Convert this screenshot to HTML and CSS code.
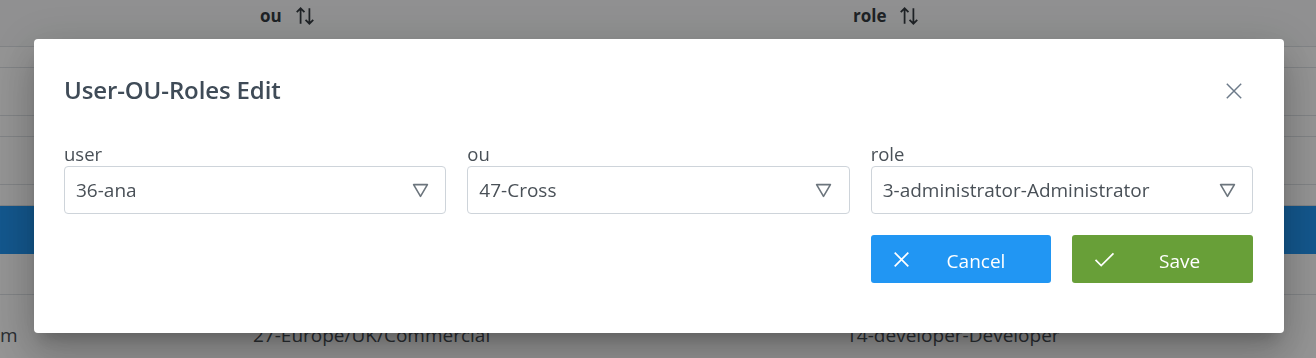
FILE: index.html
```html
<!DOCTYPE html>
<html>
<head>
<meta charset="utf-8">
<link rel="stylesheet" href="styles.css">
</head>
<body>
<div class="table">
  <div class="row thead">
    <div class="cell c1"></div>
    <div class="cell c2 th">ou <svg class="sort" viewBox="0 0 20 20"><path d="M6 17V3M2.5 6.5L6 3l3.5 3.5M14 3v14M10.5 13.5L14 17l3.5-3.5"/></svg></div>
    <div class="cell c3 th">role <svg class="sort" viewBox="0 0 20 20"><path d="M6 17V3M2.5 6.5L6 3l3.5 3.5M14 3v14M10.5 13.5L14 17l3.5-3.5"/></svg></div>
  </div>
  <div class="row h21"></div>
  <div class="row h48"></div>
  <div class="row h21"></div>
  <div class="row h48"></div>
  <div class="row h21"></div>
  <div class="row h48 sel"></div>
  <div class="row h41"></div>
  <div class="row last">
    <div class="cell c1">m</div>
    <div class="cell c2">27-Europe/UK/Commercial</div>
    <div class="cell c3">14-developer-Developer</div>
  </div>
</div>

<div class="mask">
  <div class="dialog">
    <div class="dlg-header">
      <span class="dlg-title">User-OU-Roles Edit</span>
      <button class="close" type="button"><svg viewBox="0 0 20 20"><path d="M2 2l16 16M18 2L2 18"/></svg></button>
    </div>
    <div class="form">
      <div class="field">
        <label>user</label>
        <div class="dropdown"><span class="value">36-ana</span><span class="trigger"><svg viewBox="0 0 16 14"><path d="M1.5 1.5h13L8 12.5z"/></svg></span></div>
      </div>
      <div class="field">
        <label>ou</label>
        <div class="dropdown"><span class="value">47-Cross</span><span class="trigger"><svg viewBox="0 0 16 14"><path d="M1.5 1.5h13L8 12.5z"/></svg></span></div>
      </div>
      <div class="field">
        <label>role</label>
        <div class="dropdown"><span class="value">3-administrator-Administrator</span><span class="trigger"><svg viewBox="0 0 16 14"><path d="M1.5 1.5h13L8 12.5z"/></svg></span></div>
      </div>
      <div class="actions">
        <button class="btn cancel" type="button"><svg class="bicon" viewBox="0 0 20 20"><path d="M2 2l16 16M18 2L2 18"/></svg><span class="blabel">Cancel</span></button>
        <button class="btn save" type="button"><svg class="bicon" viewBox="0 0 22 18"><path d="M1.5 9.5l6 6L20.5 2.5"/></svg><span class="blabel">Save</span></button>
      </div>
    </div>
  </div>
</div>
</body>
</html>
```

FILE: styles.css
```css
html, body {
  margin: 0;
  padding: 0;
  background: #ffffff;
  font-family: "Open Sans", "Noto Sans", sans-serif;
  color: #495057;
  overflow: hidden;
  width: 1316px;
  height: 358px;
}

.table {
  width: 1316px;
}

.row {
  display: grid;
  grid-template-columns: 237px 593px 1fr;
  border-bottom: 1px solid #dee2e6;
  box-sizing: border-box;
}

.thead {
  height: 47px;
  background: #f8f9fa;
  align-items: center;
}

.h21 { height: 21px; }
.h48 { height: 48px; }
.h41 { height: 41px; }
.sel { background: #2196f3; border-bottom-color: #2196f3; }
.last { height: 80px; align-items: center; border-bottom: none; }

.cell {
  padding-left: 16px;
  font-size: 19px;
  color: #495057;
  white-space: nowrap;
}

.c1 { padding-left: 0; }

.last .cell { padding-bottom: 1px; }

.th {
  font-weight: 700;
  font-size: 17px;
  color: #343a40;
  padding-left: 23px;
  display: flex;
  align-items: center;
  gap: 12px;
  padding-bottom: 15px;
}

.sort {
  width: 22px;
  height: 22px;
  fill: none;
  stroke: #343a40;
  stroke-width: 1.6;
}

.mask {
  position: fixed;
  inset: 0;
  background: rgba(0, 0, 0, 0.42);
  display: flex;
  align-items: flex-start;
  padding-top: 39px;
  padding-left: 34px;
  box-sizing: border-box;
}

.dialog {
  width: 1250px;
  background: #ffffff;
  border-radius: 4px;
  padding: 0 31px 50px 30px;
  box-sizing: border-box;
  box-shadow: 0 11px 15px -7px rgba(0,0,0,0.2), 0 24px 38px 3px rgba(0,0,0,0.14), 0 9px 46px 8px rgba(0,0,0,0.12);
}

.dlg-header {
  height: 104px;
  display: flex;
  align-items: center;
  justify-content: space-between;
}

.dlg-title {
  font-size: 24px;
  font-weight: 600;
  color: #3f4b57;
  letter-spacing: -0.12px;
  margin-bottom: 4px;
}

.close {
  width: 32px;
  height: 32px;
  border: none;
  background: transparent;
  padding: 0;
  display: flex;
  align-items: center;
  justify-content: center;
  margin-right: 3px;
  margin-bottom: 1px;
}

.close svg {
  width: 18px;
  height: 18px;
  fill: none;
  stroke: #6c7a89;
  stroke-width: 1.6;
}

.form {
  display: grid;
  grid-template-columns: repeat(3, 1fr);
  column-gap: 21px;
  row-gap: 21px;
}

.field {
  display: flex;
  flex-direction: column;
}

.field label {
  font-size: 18.5px;
  line-height: 22px;
  color: #495057;
  margin-bottom: 1px;
}

.dropdown {
  height: 48px;
  border: 1px solid #ced4da;
  border-radius: 4px;
  box-sizing: border-box;
  display: flex;
  align-items: center;
}

.value {
  flex: 1;
  padding-left: 11px;
  font-size: 19px;
  color: #495057;
  white-space: nowrap;
}

.trigger {
  width: 50px;
  display: flex;
  align-items: center;
  justify-content: center;
  padding-left: 3px;
}

.trigger svg {
  width: 17px;
  height: 15px;
  fill: none;
  stroke: #6c757d;
  stroke-width: 1.5;
  stroke-linejoin: round;
}

.actions {
  grid-column: 3;
  display: flex;
  gap: 21px;
}

.btn {
  flex: 1;
  height: 48px;
  border: none;
  border-radius: 3px;
  display: flex;
  align-items: center;
  padding: 3px 22px 0;
  color: #ffffff;
  font-family: "Open Sans", "Noto Sans", sans-serif;
  font-size: 19px;
  font-weight: 500;
}

.cancel { background: #2196f3; }
.save { background: #689f38; }

.bicon {
  width: 17px;
  height: 17px;
  fill: none;
  stroke: #ffffff;
  stroke-width: 2;
  margin-top: -3px;
}

.save .bicon {
  width: 21px;
  height: 17px;
  stroke-width: 1.8;
}

.blabel {
  flex: 1;
  text-align: center;
  padding-left: 13px;
}
```
